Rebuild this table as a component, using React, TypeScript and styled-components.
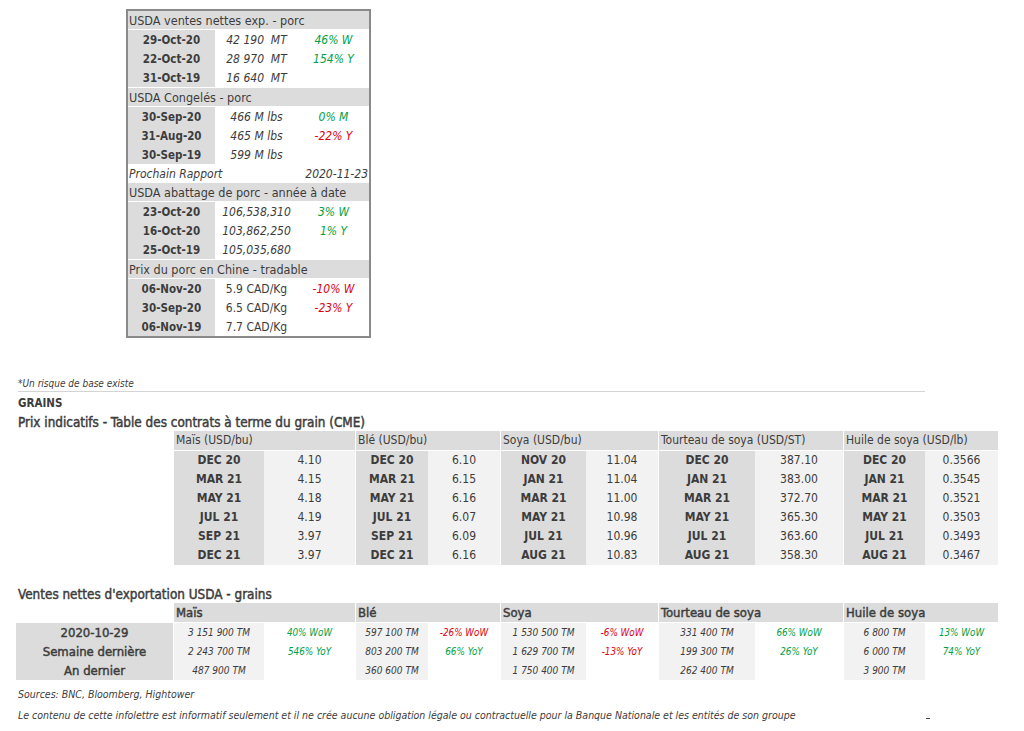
import React from 'react';
import styled, { createGlobalStyle, css } from 'styled-components';

const Global = createGlobalStyle`
  html, body { margin: 0; padding: 0; background: #fff; }
  body {
    font-family: "DejaVu Sans Condensed", "DejaVu Sans", sans-serif;
    color: #3c3c3c;
  }
`;

const GREEN = '#00a144';
const RED = '#e0000f';

const heavy = css`
  font-weight: normal;
  -webkit-text-stroke: 0.45px currentColor;
`;

const Page = styled.div`
  padding-top: 9px;
  width: 1024px;
`;

const PorkBox = styled.div`
  margin-left: 126px;
  width: 245px;
  box-sizing: border-box;
  border: 2px solid #8a8a8a;
  & > div:last-child {
    margin-bottom: 0;
  }
`;

const SectionHeader = styled.div`
  height: 18px;
  line-height: 19px;
  background: #dcdcdc;
  font-size: 12.5px;
  padding-left: 1px;
  margin-bottom: 1px;
  white-space: nowrap;
`;

const DataBlock = styled.div`
  display: grid;
  grid-template-columns: 87px 83px 71px;
  grid-auto-rows: 19px;
  margin-bottom: 1px;
`;

const DateCell = styled.div`
  background: #dcdcdc;
  font-weight: bold;
  font-size: 11.5px;
  line-height: 20px;
  text-align: center;
  white-space: nowrap;
`;

const ValueCell = styled.div<{ $italic: boolean }>`
  font-size: 12px;
  line-height: 20px;
  text-align: center;
  font-style: ${(p) => (p.$italic ? 'italic' : 'normal')};
  white-space: pre;
`;

const PctCell = styled.div<{ $color: string }>`
  font-size: 12px;
  line-height: 20px;
  text-align: center;
  font-style: italic;
  color: ${(p) => p.$color};
  white-space: nowrap;
`;

const NextRow = styled.div`
  display: flex;
  justify-content: space-between;
  height: 18px;
  line-height: 19px;
  font-size: 12px;
  font-style: italic;
  padding: 0 1px 0 1px;
`;

const Lower = styled.div`
  margin-top: 39px;
  padding-left: 18px;
`;

const Note = styled.div`
  font-size: 10px;
  font-style: italic;
  line-height: 13px;
`;

const Rule = styled.div`
  width: 907px;
  height: 1px;
  background: #d4d4d4;
  margin-top: 1px;
`;

const Title = styled.div`
  font-size: 11.5px;
  font-weight: bold;
  line-height: 17px;
  margin-top: 3px;
`;

const Heading = styled.div<{ $top?: number }>`
  font-size: 13.4px;
  ${heavy};
  line-height: 17px;
  margin-top: ${(p) => p.$top ?? 0}px;
  white-space: nowrap;
`;

const TableRow = styled.div<{ $offset: number }>`
  display: flex;
  gap: 1px;
  margin-left: ${(p) => p.$offset}px;
`;

const Group = styled.div`
  display: flex;
  flex-direction: column;
`;

const GroupHeader = styled.div<{ $bold?: boolean }>`
  height: 19px;
  line-height: 19px;
  background: #dcdcdc;
  font-size: ${(p) => (p.$bold ? '13px' : '12px')};
  ${(p) => p.$bold && heavy};
  padding-left: 2px;
  margin-bottom: 1px;
  white-space: nowrap;
`;

const GroupBody = styled.div<{ $cols: string }>`
  display: grid;
  grid-template-columns: ${(p) => p.$cols};
  grid-auto-rows: 19px;
`;

const FutDate = styled.div`
  background: #dcdcdc;
  font-weight: bold;
  font-size: 12px;
  line-height: 19px;
  text-align: center;
`;

const FutValue = styled.div`
  background: #f2f2f2;
  font-size: 12px;
  line-height: 19px;
  text-align: center;
`;

const LabelColumn = styled.div`
  display: flex;
  flex-direction: column;
  width: 157px;
`;

const LabelSpacer = styled.div`
  height: 20px;
`;

const Label = styled.div`
  height: 19px;
  line-height: 19px;
  background: #dcdcdc;
  ${heavy};
  font-size: 13px;
  text-align: center;
  white-space: nowrap;
`;

const ExpValue = styled.div`
  background: #f2f2f2;
  font-size: 10px;
  font-style: italic;
  line-height: 19px;
  text-align: center;
  white-space: nowrap;
`;

const ExpPct = styled.div<{ $color: string }>`
  font-size: 9.8px;
  font-style: italic;
  line-height: 19px;
  text-align: center;
  color: ${(p) => p.$color};
  white-space: nowrap;
`;

const Small = styled.div<{ $top: number }>`
  font-size: 10.5px;
  font-style: italic;
  line-height: 14px;
  margin-top: ${(p) => p.$top}px;
  white-space: nowrap;
`;

const FooterLine = styled.div`
  display: flex;
  justify-content: space-between;
  align-items: flex-end;
  width: 912px;
  margin-top: 7px;
`;

const Dash = styled.span`
  display: block;
  width: 4px;
  height: 1px;
  background: #444;
  margin-bottom: 3px;
`;

type PorkRow = { date: string; value: string; pct?: string; color?: string; italic?: boolean };
type PorkSection = { title: string; rows: PorkRow[] };

const porkSections: PorkSection[] = [
  {
    title: 'USDA ventes nettes exp. - porc',
    rows: [
      { date: '29-Oct-20', value: '42 190  MT', pct: '46% W', color: GREEN },
      { date: '22-Oct-20', value: '28 970  MT', pct: '154% Y', color: GREEN },
      { date: '31-Oct-19', value: '16 640  MT' },
    ],
  },
  {
    title: 'USDA Congelés - porc',
    rows: [
      { date: '30-Sep-20', value: '466 M lbs', pct: '0% M', color: GREEN },
      { date: '31-Aug-20', value: '465 M lbs', pct: '-22% Y', color: RED },
      { date: '30-Sep-19', value: '599 M lbs' },
    ],
  },
  {
    title: 'USDA abattage de porc - année à date',
    rows: [
      { date: '23-Oct-20', value: '106,538,310', pct: '3% W', color: GREEN },
      { date: '16-Oct-20', value: '103,862,250', pct: '1% Y', color: GREEN },
      { date: '25-Oct-19', value: '105,035,680' },
    ],
  },
  {
    title: 'Prix du porc en Chine - tradable',
    rows: [
      { date: '06-Nov-20', value: '5.9 CAD/Kg', pct: '-10% W', color: RED, italic: false },
      { date: '30-Sep-20', value: '6.5 CAD/Kg', pct: '-23% Y', color: RED, italic: false },
      { date: '06-Nov-19', value: '7.7 CAD/Kg', italic: false },
    ],
  },
];

const colWidths: [number, number][] = [
  [90, 91],
  [72, 72],
  [85, 72],
  [96, 88],
  [81, 73],
];

const futures = [
  {
    title: 'Maïs (USD/bu)',
    rows: [['DEC 20', '4.10'], ['MAR 21', '4.15'], ['MAY 21', '4.18'], ['JUL 21', '4.19'], ['SEP 21', '3.97'], ['DEC 21', '3.97']],
  },
  {
    title: 'Blé (USD/bu)',
    rows: [['DEC 20', '6.10'], ['MAR 21', '6.15'], ['MAY 21', '6.16'], ['JUL 21', '6.07'], ['SEP 21', '6.09'], ['DEC 21', '6.16']],
  },
  {
    title: 'Soya (USD/bu)',
    rows: [['NOV 20', '11.04'], ['JAN 21', '11.04'], ['MAR 21', '11.00'], ['MAY 21', '10.98'], ['JUL 21', '10.96'], ['AUG 21', '10.83']],
  },
  {
    title: 'Tourteau de soya (USD/ST)',
    rows: [['DEC 20', '387.10'], ['JAN 21', '383.00'], ['MAR 21', '372.70'], ['MAY 21', '365.30'], ['JUL 21', '363.60'], ['AUG 21', '358.30']],
  },
  {
    title: 'Huile de soya (USD/lb)',
    rows: [['DEC 20', '0.3566'], ['JAN 21', '0.3545'], ['MAR 21', '0.3521'], ['MAY 21', '0.3503'], ['JUL 21', '0.3493'], ['AUG 21', '0.3467']],
  },
];

type ExpRow = { value: string; pct?: string; color?: string };
const exports: { title: string; rows: ExpRow[] }[] = [
  {
    title: 'Maïs',
    rows: [
      { value: '3 151 900 TM', pct: '40% WoW', color: GREEN },
      { value: '2 243 700 TM', pct: '546% YoY', color: GREEN },
      { value: '487 900 TM' },
    ],
  },
  {
    title: 'Blé',
    rows: [
      { value: '597 100 TM', pct: '-26% WoW', color: RED },
      { value: '803 200 TM', pct: '66% YoY', color: GREEN },
      { value: '360 600 TM' },
    ],
  },
  {
    title: 'Soya',
    rows: [
      { value: '1 530 500 TM', pct: '-6% WoW', color: RED },
      { value: '1 629 700 TM', pct: '-13% YoY', color: RED },
      { value: '1 750 400 TM' },
    ],
  },
  {
    title: 'Tourteau de soya',
    rows: [
      { value: '331 400 TM', pct: '66% WoW', color: GREEN },
      { value: '199 300 TM', pct: '26% YoY', color: GREEN },
      { value: '262 400 TM' },
    ],
  },
  {
    title: 'Huile de soya',
    rows: [
      { value: '6 800 TM', pct: '13% WoW', color: GREEN },
      { value: '6 000 TM', pct: '74% YoY', color: GREEN },
      { value: '3 900 TM' },
    ],
  },
];

const expLabels = ['2020-10-29', 'Semaine dernière', 'An dernier'];

function PorkBlock({ section }: { section: PorkSection }) {
  return (
    <>
      <SectionHeader>{section.title}</SectionHeader>
      <DataBlock>
        {section.rows.map((r) => (
          <React.Fragment key={r.date}>
            <DateCell>{r.date}</DateCell>
            <ValueCell $italic={r.italic !== false}>{r.value}</ValueCell>
            <PctCell $color={r.color ?? 'inherit'}>{r.pct ?? ''}</PctCell>
          </React.Fragment>
        ))}
      </DataBlock>
    </>
  );
}

export default function App() {
  return (
    <Page>
      <Global />
      <PorkBox>
        <PorkBlock section={porkSections[0]} />
        <PorkBlock section={porkSections[1]} />
        <NextRow>
          <span>Prochain Rapport</span>
          <span>2020-11-23</span>
        </NextRow>
        <PorkBlock section={porkSections[2]} />
        <PorkBlock section={porkSections[3]} />
      </PorkBox>

      <Lower>
        <Note>*Un risque de base existe</Note>
        <Rule />
        <Title>GRAINS</Title>
        <Heading $top={2}>Prix indicatifs - Table des contrats à terme du grain (CME)</Heading>
        <TableRow $offset={156}>
          {futures.map((g, i) => (
            <Group key={g.title}>
              <GroupHeader>{g.title}</GroupHeader>
              <GroupBody $cols={`${colWidths[i][0]}px ${colWidths[i][1]}px`}>
                {g.rows.map(([d, v]) => (
                  <React.Fragment key={d}>
                    <FutDate>{d}</FutDate>
                    <FutValue>{v}</FutValue>
                  </React.Fragment>
                ))}
              </GroupBody>
            </Group>
          ))}
        </TableRow>

        <Heading $top={21}>Ventes nettes d'exportation USDA - grains</Heading>
        <TableRow $offset={-2}>
          <LabelColumn>
            <LabelSpacer />
            {expLabels.map((l) => (
              <Label key={l}>{l}</Label>
            ))}
          </LabelColumn>
          {exports.map((g, i) => (
            <Group key={g.title}>
              <GroupHeader $bold>{g.title}</GroupHeader>
              <GroupBody $cols={`${colWidths[i][0]}px ${colWidths[i][1]}px`}>
                {g.rows.map((r) => (
                  <React.Fragment key={r.value}>
                    <ExpValue>{r.value}</ExpValue>
                    <ExpPct $color={r.color ?? 'inherit'}>{r.pct ?? ''}</ExpPct>
                  </React.Fragment>
                ))}
              </GroupBody>
            </Group>
          ))}
        </TableRow>

        <Small $top={7}>Sources: BNC, Bloomberg, Hightower</Small>
        <FooterLine>
          <Small $top={0}>
            Le contenu de cette infolettre est informatif seulement et il ne crée aucune obligation légale ou contractuelle pour la Banque Nationale et les entités de son groupe
          </Small>
          <Dash />
        </FooterLine>
      </Lower>
    </Page>
  );
}
